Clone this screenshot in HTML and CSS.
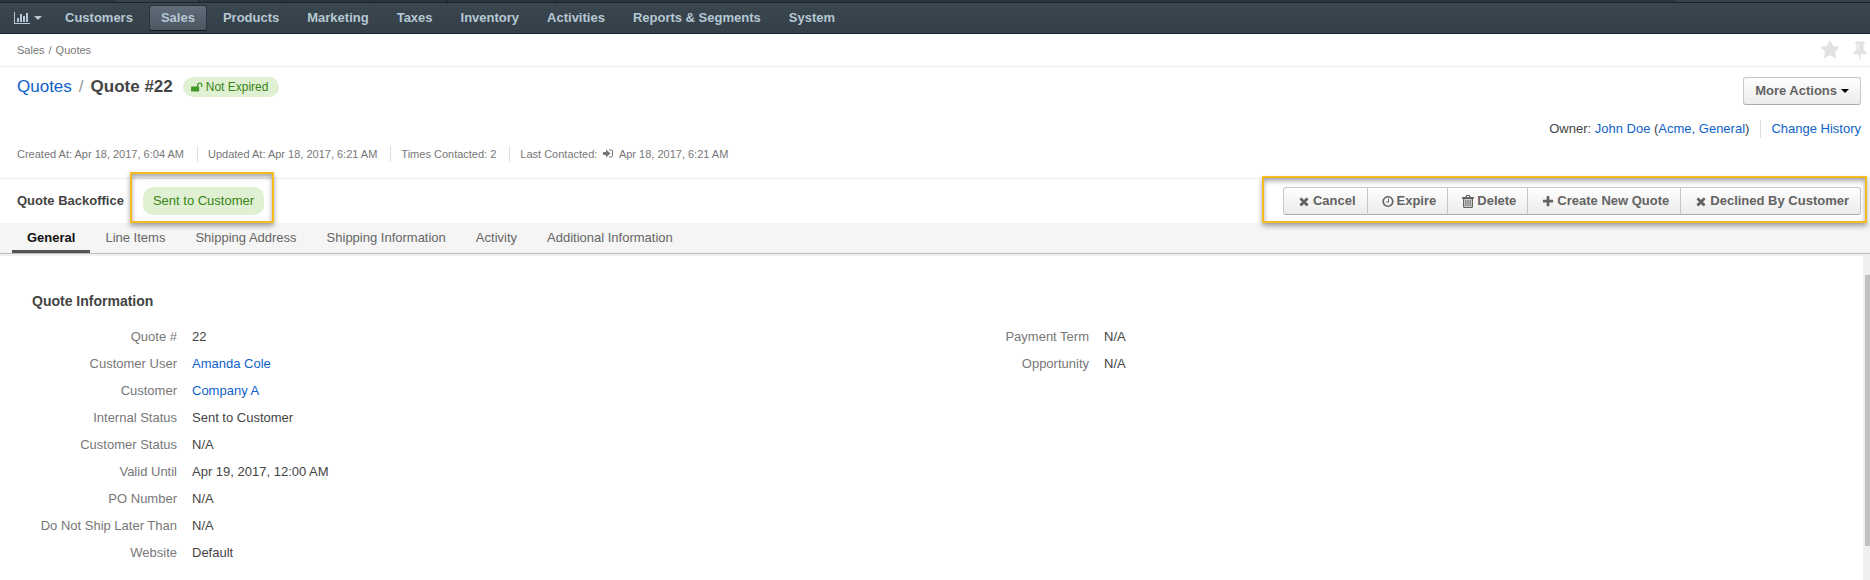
FILE: index.html
```html
<!DOCTYPE html>
<html lang="en">
<head>
<meta charset="utf-8">
<title>Quote #22 - Quotes - Sales</title>
<link rel="stylesheet" href="styles.css">
</head>
<body>
<svg class="sprite" aria-hidden="true">
  <symbol id="i-times" viewBox="0 0 1792 1792"><path d="M1490 1322q0 40-28 68l-136 136q-28 28-68 28t-68-28l-294-294-294 294q-28 28-68 28t-68-28l-136-136q-28-28-28-68t28-68l294-294-294-294q-28-28-28-68t28-68l136-136q28-28 68-28t68 28l294 294 294-294q28-28 68-28t68 28l136 136q28 28 28 68t-28 68l-294 294 294 294q28 28 28 68z"/></symbol>
  <symbol id="i-plus" viewBox="0 0 1792 1792"><path d="M1600 736v192q0 40-28 68t-68 28h-416v416q0 40-28 68t-68 28h-192q-40 0-68-28t-28-68v-416h-416q-40 0-68-28t-28-68v-192q0-40 28-68t68-28h416v-416q0-40 28-68t68-28h192q40 0 68 28t28 68v416h416q40 0 68 28t28 68z"/></symbol>
  <symbol id="i-star" viewBox="0 0 1792 1792"><path d="M1728 647q0 22-26 48l-363 354 86 500q1 7 1 20 0 21-10.500 35.500t-30.500 14.500q-19 0-40-12l-449-236-449 236q-22 12-40 12-21 0-31.500-14.500t-10.500-35.500q0-6 2-20l86-500-364-354q-25-27-25-48 0-37 56-46l502-73 225-455q19-41 49-41t49 41l225 455 502 73q56 9 56 46z"/></symbol>
  <symbol id="i-clock" viewBox="0 0 1792 1792"><path d="M1024 544v448q0 14-9 23t-23 9h-320q-14 0-23-9t-9-23v-64q0-14 9-23t23-9h224v-352q0-14 9-23t23-9h64q14 0 23 9t9 23zm416 352q0-148-73-273t-198-198-273-73-273 73-198 198-73 273 73 273 198 198 273 73 273-73 198-198 73-273zm224 0q0 209-103 385.500t-279.500 279.500-385.500 103-385.500-103-279.500-279.500-103-385.500 103-385.500 279.500-279.500 385.500-103 385.500 103 279.500 279.500 103 385.500z"/></symbol>
  <symbol id="i-trash" viewBox="0 0 12 13"><path d="M1 3h10v8.500q0 1.500-1.500 1.500h-7Q1 13 1 11.500zM2.300 4.300v6.900q0 .6.500.6h6.400q.5 0 .5-.6V4.300z" fill-rule="evenodd"/><path d="M3.300 5h1.200v6H3.300zM5.400 5h1.200v6H5.400zM7.500 5h1.200v6H7.500zM0 2h12v1.400H0zM3.300 2l.6-1.400Q4.100 0 4.800 0h2.400q.7 0 .9.600L8.700 2H7.400l-.4-.9H5L4.600 2z"/></symbol>
  <symbol id="i-pin" viewBox="0 0 1792 1792"><path d="M800 864v-448q0-14-9-23t-23-9-23 9-9 23v448q0 14 9 23t23 9 23-9 9-23zm672 352q0 26-19 45t-45 19h-429l-51 483q-2 12-10.500 20.500t-20.500 8.500h-1q-27 0-32-27l-76-485h-404q-26 0-45-19t-19-45q0-123 78.500-221.500t177.500-98.500v-512q-52 0-90-38t-38-90 38-90 90-38h640q52 0 90 38t38 90-38 90-90 38v512q99 0 177.500 98.500t78.500 221.500z"/></symbol>
  <symbol id="i-chart" viewBox="0 0 16 12"><path d="M0 0h1v11h15v1H0zM3 6h2v4H3zM6 2h2v8H6zM9 4h2v6H9zM12 1h2v9h-2z"/></symbol>
  <symbol id="i-unlock" viewBox="0 0 12 10"><path d="M1 4.500h5V3.200a2.700 2.700 0 0 1 5.400 0V5h-1.300V3.200a1.400 1.400 0 0 0-2.800 0v1.300h.2q.7 0 .7.700v3.600q0 .7-.7.700H.7q-.7 0-.7-.7V5.200q0-.7.700-.7z"/></symbol>
  <symbol id="i-signin" viewBox="0 0 10 9"><path d="M0 3h3V.5l4.500 4L3 8.500V6H0zM6 .5h2q2 0 2 2v4q0 2-2 2H6v-1h2q1 0 1-1v-4q0-1-1-1H6z"/></symbol>
</svg>

<div class="tabstrip" aria-hidden="true">
  <span class="lead"></span><span class="on"></span><span class="w-m"></span><span class="w-m"></span><span class="w-s"></span><span class="w-l"></span><span class="fill"></span><span class="tail"></span>
</div>
<nav class="nav">
  <button class="nav-menu" type="button" aria-label="Dashboards"><svg class="chart"><use href="#i-chart"/></svg><span class="caret"></span></button>
  <a href="#">Customers</a>
  <a href="#" class="active">Sales</a>
  <a href="#">Products</a>
  <a href="#">Marketing</a>
  <a href="#">Taxes</a>
  <a href="#">Inventory</a>
  <a href="#">Activities</a>
  <a href="#">Reports &amp; Segments</a>
  <a href="#">System</a>
</nav>

<div class="crumbs">
  <span>Sales</span><span>/</span><span>Quotes</span>
  <div class="tools">
    <button type="button" aria-label="Favorite"><svg><use href="#i-star"/></svg></button>
    <button type="button" aria-label="Pin"><svg><use href="#i-pin"/></svg></button>
  </div>
</div>

<header class="head">
  <div class="title-row">
    <h1><a href="#">Quotes</a><span class="slash">/</span>Quote #22</h1>
    <span class="badge"><svg><use href="#i-unlock"/></svg>Not Expired</span>
    <button class="btn more" type="button">More Actions<span class="caret"></span></button>
  </div>
  <div class="owner">
    <span>Owner: <a href="#">John Doe</a> (<a href="#">Acme, General</a>)</span>
    <a class="history" href="#">Change History</a>
  </div>
  <ul class="meta">
    <li>Created At: Apr 18, 2017, 6:04 AM</li>
    <li>Updated At: Apr 18, 2017, 6:21 AM</li>
    <li>Times Contacted: 2</li>
    <li>Last Contacted: <svg><use href="#i-signin"/></svg> Apr 18, 2017, 6:21 AM</li>
  </ul>
</header>

<div class="flow">
  <strong>Quote Backoffice</strong>
  <div class="marked step"><span class="status">Sent to Customer</span></div>
  <div class="marked actions">
    <button class="btn" type="button"><svg><use href="#i-times"/></svg>Cancel</button>
    <button class="btn" type="button"><svg><use href="#i-clock"/></svg>Expire</button>
    <button class="btn" type="button"><svg><use href="#i-trash"/></svg>Delete</button>
    <button class="btn" type="button"><svg><use href="#i-plus"/></svg>Create New Quote</button>
    <button class="btn" type="button"><svg><use href="#i-times"/></svg>Declined By Customer</button>
  </div>
</div>

<nav class="tabs">
  <a href="#" class="current">General</a>
  <a href="#">Line Items</a>
  <a href="#">Shipping Address</a>
  <a href="#">Shipping Information</a>
  <a href="#">Activity</a>
  <a href="#">Additional Information</a>
</nav>

<div class="body">
  <main class="content">
    <h2>Quote Information</h2>
    <div class="columns">
      <dl>
        <dt>Quote #</dt><dd>22</dd>
        <dt>Customer User</dt><dd><a href="#">Amanda Cole</a></dd>
        <dt>Customer</dt><dd><a href="#">Company A</a></dd>
        <dt>Internal Status</dt><dd>Sent to Customer</dd>
        <dt>Customer Status</dt><dd>N/A</dd>
        <dt>Valid Until</dt><dd>Apr 19, 2017, 12:00 AM</dd>
        <dt>PO Number</dt><dd>N/A</dd>
        <dt>Do Not Ship Later Than</dt><dd>N/A</dd>
        <dt>Website</dt><dd>Default</dd>
      </dl>
      <dl>
        <dt>Payment Term</dt><dd>N/A</dd>
        <dt>Opportunity</dt><dd>N/A</dd>
      </dl>
    </div>
  </main>
  <div class="scroll" aria-hidden="true"><div class="thumb"></div></div>
</div>
</body>
</html>
```

FILE: styles.css
```css
* { box-sizing: border-box; }

body {
  margin: 0;
  min-height: 100vh;
  display: flex;
  flex-direction: column;
  background: #fff;
  color: #444;
  font: 13px/18px "Liberation Sans", Arial, sans-serif;
}

a { color: #0f62c9; text-decoration: none; }
svg { fill: currentColor; flex: none; }
button { font: inherit; color: inherit; cursor: pointer; }
.sprite { position: absolute; width: 0; height: 0; }

.caret {
  border: 4px solid transparent;
  border-top-color: currentColor;
  border-bottom: 0;
}

/* Top strip and main navigation */
.tabstrip {
  display: flex;
  height: 3px;
  background: #2c343c;
  border-bottom: 1px solid #1d242c;
}
.tabstrip span { border-right: 1px solid #1d242c; }
.tabstrip .lead { width: 116px; border: 0; }
.tabstrip .on { width: 83px; background: #36434c; }
.tabstrip .w-m { width: 88px; }
.tabstrip .w-s { width: 73px; }
.tabstrip .w-l { width: 108px; }
.tabstrip .fill { flex: 1; }
.tabstrip .tail { width: 195px; background: #36434c; border: 0; }

.nav {
  display: flex;
  align-items: center;
  gap: 4px;
  height: 31px;
  padding-left: 14px;
  background: linear-gradient(#3a474f, #353f49);
  border-bottom: 1px solid #1c2230;
}
.nav a {
  padding: 3px 11px;
  border: 1px solid transparent;
  border-radius: 3px;
  color: #b5c8d3;
  font-weight: bold;
}
.nav .active {
  background: linear-gradient(#606c78, #4b5762);
  border-color: #2a323b;
  border-bottom-color: #12171d;
}
.nav-menu {
  display: flex;
  align-items: center;
  gap: 4px;
  width: 35px;
  padding: 0;
  border: 0;
  background: none;
  color: #b5c8d3;
}
.chart { width: 16px; height: 12px; }

/* Breadcrumbs */
.crumbs {
  display: flex;
  align-items: center;
  gap: 4px;
  height: 33px;
  padding-left: 17px;
  border-bottom: 1px solid #eee;
  color: #777;
  font-size: 11px;
}
.tools { display: flex; gap: 10px; margin-left: auto; }
.tools button { display: flex; padding: 0; border: 0; background: none; color: #e2e2e2; }
.tools svg { width: 20px; height: 20px; }

/* Page heading */
.head { padding: 10px 9px 16px 17px; border-bottom: 1px solid #eee; }
.title-row { display: flex; align-items: flex-start; }
h1 { margin: 0; font-size: 17px; line-height: 20px; }
h1 a { font-weight: normal; }
.slash { margin: 0 7px; color: #999; font-weight: normal; }
.badge {
  display: flex;
  align-items: center;
  gap: 3px;
  margin-left: 10px;
  padding: 0 11px 0 8px;
  border-radius: 10px;
  background: #dff0d3;
  color: #398314;
  font-size: 12px;
  line-height: 20px;
}
.badge svg { width: 12px; height: 10px; color: #43982c; }

.btn {
  display: flex;
  align-items: center;
  height: 28px;
  padding: 0 11px;
  border: 1px solid #c6c6c6;
  border-bottom-color: #acacac;
  border-radius: 3px;
  background: linear-gradient(#fefefe, #ececec);
  color: #636363;
  font-weight: bold;
}
.more { margin-left: auto; gap: 4px; }
.more .caret { color: #000; }

.owner { display: flex; justify-content: flex-end; margin-top: 15px; }
.history { margin-left: 11px; padding-left: 10px; border-left: 1px solid #ddd; }

.meta {
  display: flex;
  margin: 8px 0 0;
  padding: 0;
  list-style: none;
  color: #777;
  font-size: 11px;
  line-height: 16px;
}
.meta li + li { margin-left: 13px; padding-left: 10px; border-left: 1px solid #ddd; }
.meta svg { width: 10px; height: 9px; margin: 0 3px; }

/* Workflow bar */
.flow { display: flex; align-items: center; padding: 8px 9px 8px 17px; }
.marked { position: relative; }
.marked::after {
  content: "";
  position: absolute;
  inset: -11px -6px -8px -21px;
  border: 2px solid #f5bb25;
  box-shadow: 0 3px 5px rgba(0, 0, 0, .35), inset 0 3px 5px rgba(0, 0, 0, .35);
  pointer-events: none;
}
.step { margin-left: 19px; }
.step::after { inset: -15px -10px -8px -13px; }
.status {
  display: block;
  padding: 5px 10px;
  border-radius: 10px;
  background: #dff0d3;
  color: #398314;
}
.actions { display: flex; margin-left: auto; }
.actions .btn { gap: 2px; padding: 0 11px 0 13px; border-radius: 0; }
.actions .btn + .btn { border-left: 0; }
.actions .btn:first-child { border-radius: 3px 0 0 3px; }
.actions .btn:last-child { border-radius: 0 3px 3px 0; }
.actions svg { width: 14px; height: 13px; }

/* Section tabs */
.tabs {
  display: flex;
  padding-left: 12px;
  background: #f5f5f5;
  border-bottom: 1px solid #bbb;
}
.tabs a { padding: 6px 15px 3px; border-bottom: 3px solid transparent; color: #666; }
.tabs .current { border-color: #555; color: #111; font-weight: bold; }

/* Record details */
.body { flex: 1; display: flex; box-shadow: inset 0 2px #f0f0f0; }
.content { flex: 1; padding: 38px 7px 0 32px; }
h2 { margin: 0 0 18px; font-size: 14px; line-height: 18px; }
.columns { display: grid; grid-template-columns: 1fr 1fr; align-items: start; }
dl {
  display: grid;
  grid-template-columns: 145px 1fr;
  column-gap: 15px;
  row-gap: 9px;
  margin: 0;
}
dt { color: #777; text-align: right; }
dd { margin: 0; }

.scroll { width: 7px; padding: 21px 0 0 2px; background: #f0f0f0; }
.thumb { height: 89%; background: #c1c1c1; }
```
